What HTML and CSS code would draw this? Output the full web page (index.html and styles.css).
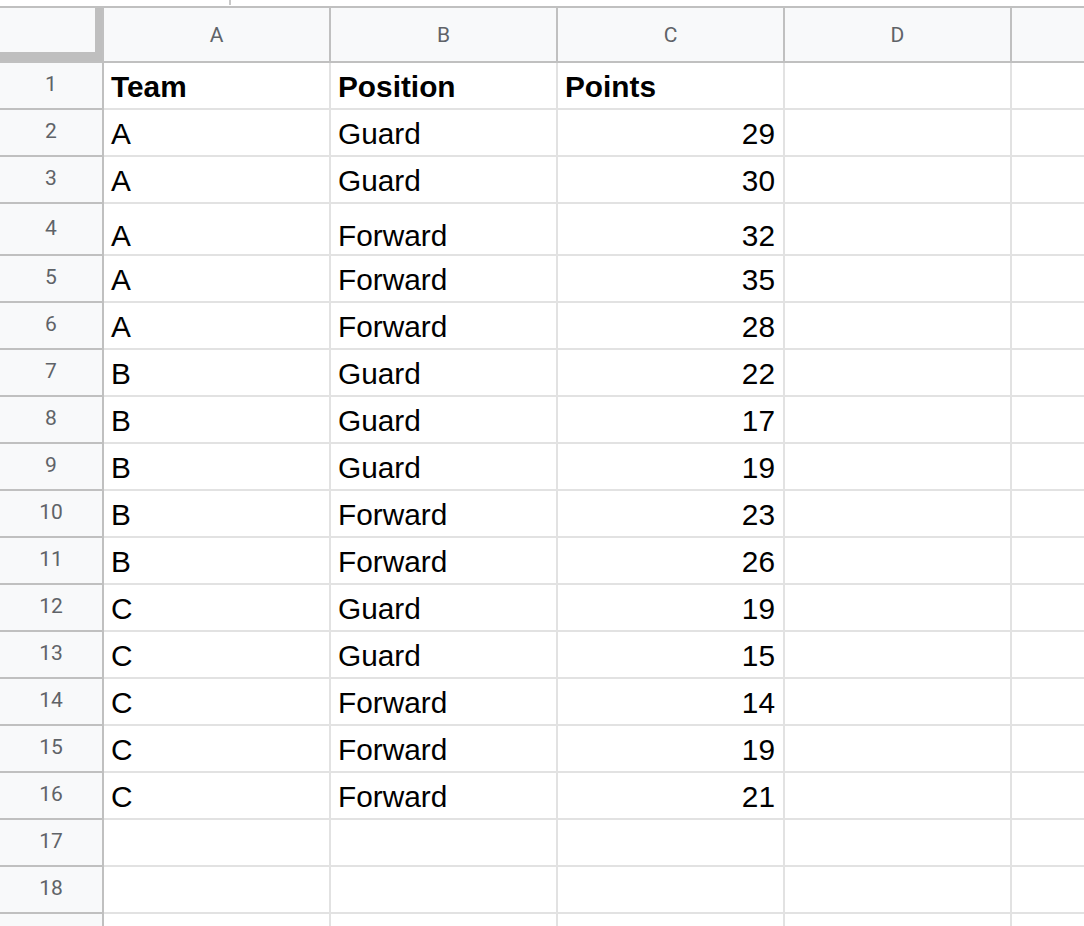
FILE: index.html
```html
<!DOCTYPE html>
<html>
<head>
<meta charset="utf-8">
<title>Sheet</title>
<link rel="stylesheet" href="styles.css">
</head>
<body>
<div class="topstrip"><span class="tick"></span></div>
<div class="sheet">
  <div class="row hdr">
    <div class="ch corner"></div>
    <div class="ch">A</div>
    <div class="ch">B</div>
    <div class="ch">C</div>
    <div class="ch">D</div>
    <div class="ch"></div>
  </div>
  <div class="row"><div class="rh">1</div><div class="cell bold">Team</div><div class="cell bold">Position</div><div class="cell bold">Points</div><div class="cell"></div><div class="cell"></div></div>
  <div class="row"><div class="rh">2</div><div class="cell">A</div><div class="cell">Guard</div><div class="cell num">29</div><div class="cell"></div><div class="cell"></div></div>
  <div class="row"><div class="rh">3</div><div class="cell">A</div><div class="cell">Guard</div><div class="cell num">30</div><div class="cell"></div><div class="cell"></div></div>
  <div class="row tall"><div class="rh">4</div><div class="cell">A</div><div class="cell">Forward</div><div class="cell num">32</div><div class="cell"></div><div class="cell"></div></div>
  <div class="row"><div class="rh">5</div><div class="cell">A</div><div class="cell">Forward</div><div class="cell num">35</div><div class="cell"></div><div class="cell"></div></div>
  <div class="row"><div class="rh">6</div><div class="cell">A</div><div class="cell">Forward</div><div class="cell num">28</div><div class="cell"></div><div class="cell"></div></div>
  <div class="row"><div class="rh">7</div><div class="cell">B</div><div class="cell">Guard</div><div class="cell num">22</div><div class="cell"></div><div class="cell"></div></div>
  <div class="row"><div class="rh">8</div><div class="cell">B</div><div class="cell">Guard</div><div class="cell num">17</div><div class="cell"></div><div class="cell"></div></div>
  <div class="row"><div class="rh">9</div><div class="cell">B</div><div class="cell">Guard</div><div class="cell num">19</div><div class="cell"></div><div class="cell"></div></div>
  <div class="row"><div class="rh">10</div><div class="cell">B</div><div class="cell">Forward</div><div class="cell num">23</div><div class="cell"></div><div class="cell"></div></div>
  <div class="row"><div class="rh">11</div><div class="cell">B</div><div class="cell">Forward</div><div class="cell num">26</div><div class="cell"></div><div class="cell"></div></div>
  <div class="row"><div class="rh">12</div><div class="cell">C</div><div class="cell">Guard</div><div class="cell num">19</div><div class="cell"></div><div class="cell"></div></div>
  <div class="row"><div class="rh">13</div><div class="cell">C</div><div class="cell">Guard</div><div class="cell num">15</div><div class="cell"></div><div class="cell"></div></div>
  <div class="row"><div class="rh">14</div><div class="cell">C</div><div class="cell">Forward</div><div class="cell num">14</div><div class="cell"></div><div class="cell"></div></div>
  <div class="row"><div class="rh">15</div><div class="cell">C</div><div class="cell">Forward</div><div class="cell num">19</div><div class="cell"></div><div class="cell"></div></div>
  <div class="row"><div class="rh">16</div><div class="cell">C</div><div class="cell">Forward</div><div class="cell num">21</div><div class="cell"></div><div class="cell"></div></div>
  <div class="row"><div class="rh">17</div><div class="cell"></div><div class="cell"></div><div class="cell"></div><div class="cell"></div><div class="cell"></div></div>
  <div class="row"><div class="rh">18</div><div class="cell"></div><div class="cell"></div><div class="cell"></div><div class="cell"></div><div class="cell"></div></div>
  <div class="row"><div class="rh"></div><div class="cell"></div><div class="cell"></div><div class="cell"></div><div class="cell"></div><div class="cell"></div></div>
</div>
</body>
</html>
```

FILE: styles.css
```css
html, body {
  margin: 0;
  padding: 0;
}
body {
  width: 1084px;
  height: 926px;
  overflow: hidden;
  background: #ffffff;
  font-family: "Liberation Sans", Arial, sans-serif;
  color: #000000;
}
.topstrip {
  height: 6px;
  display: flex;
}
.tick {
  margin-left: 229px;
  width: 2px;
  height: 5px;
  background: #c8c8c8;
}
.sheet {
  width: 1084px;
  overflow: hidden;
}
.row {
  display: grid;
  grid-template-columns: 104px repeat(5, 227px);
  height: 47px;
}
.row.tall {
  height: 52px;
}
.row.hdr {
  height: 57px;
  border-top: 2px solid #c0c0c0;
  box-sizing: border-box;
  width: 1239px;
}
.ch, .rh {
  box-sizing: border-box;
  background: #f8f9fa;
  border-right: 2px solid #c0c0c0;
  border-bottom: 2px solid #c0c0c0;
  color: #5f6368;
  font-family: Roboto, "Noto Sans", sans-serif;
  font-size: 21px;
  display: flex;
  align-items: center;
  justify-content: center;
}
.rh {
  padding-bottom: 3px;
}
.corner {
  box-shadow: inset -7px -9px 0 #bfbfbf;
}
.cell {
  box-sizing: border-box;
  border-right: 2px solid #e2e2e2;
  border-bottom: 2px solid #e2e2e2;
  display: flex;
  align-items: flex-end;
  padding: 0 8px 5px 7px;
  font-size: 29.8px;
  line-height: 33px;
  overflow: hidden;
  white-space: nowrap;
}
.row.tall .cell {
  padding-bottom: 2px;
}
.bold {
  font-weight: bold;
}
.num {
  justify-content: flex-end;
}
```
